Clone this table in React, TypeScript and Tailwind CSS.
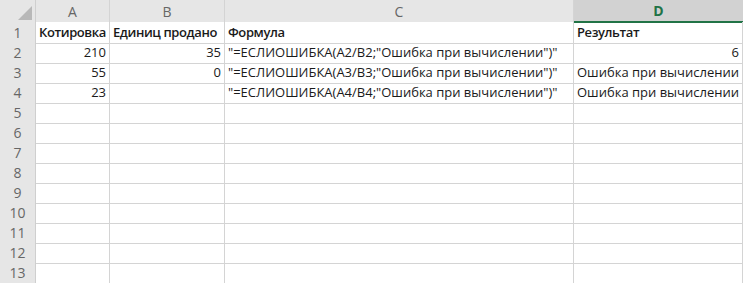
const COLS = ["A", "B", "C", "D"];

type Cell = { text: string; align?: "left" | "right"; bold?: boolean };

const ROWS: Cell[][] = [
  [
    { text: "Котировка", bold: true },
    { text: "Единиц продано", bold: true },
    { text: "Формула", bold: true },
    { text: "Результат", bold: true },
  ],
  [
    { text: "210", align: "right" },
    { text: "35", align: "right" },
    { text: "\"=ЕСЛИОШИБКА(A2/B2;\"Ошибка при вычислении\")\"" },
    { text: "6", align: "right" },
  ],
  [
    { text: "55", align: "right" },
    { text: "0", align: "right" },
    { text: "\"=ЕСЛИОШИБКА(A3/B3;\"Ошибка при вычислении\")\"" },
    { text: "Ошибка при вычислении" },
  ],
  [
    { text: "23", align: "right" },
    { text: "" },
    { text: "\"=ЕСЛИОШИБКА(A4/B4;\"Ошибка при вычислении\")\"" },
    { text: "Ошибка при вычислении" },
  ],
];

const grid = "grid grid-cols-[36px_74px_115px_349px_1fr]";

export default function App() {
  const rows = Array.from({ length: 13 }, (_, i) => ROWS[i] ?? [{ text: "" }, { text: "" }, { text: "" }, { text: "" }]);
  return (
    <div
      className="w-[743px] h-[283px] overflow-hidden bg-white text-[13px] text-[#1a1a1a]"
      style={{ fontFamily: "'Open Sans', 'Noto Sans', sans-serif" }}
    >
      <div className={`${grid} h-[22px] bg-[#e6e6e6]`}>
        <div className="relative border-r border-[#cfcfcf]">
          <div className="absolute right-[3px] bottom-[3px] w-0 h-0 border-l-[14px] border-l-transparent border-b-[14px] border-b-[#b8b8b8]" />
        </div>
        {COLS.map((c) =>
          c === "D" ? (
            <div
              key={c}
              className="flex items-center justify-center bg-[#d2d2d2] border-b-2 border-[#217346] font-bold text-[#217346] text-[14px]"
            >
              {c}
            </div>
          ) : (
            <div key={c} className="flex items-center justify-center border-r border-[#d4d4d4] text-[#666666] text-[14px]">
              {c}
            </div>
          )
        )}
      </div>
      {rows.map((r, i) => (
        <div key={i} className={`${grid} h-[20px]`}>
          <div className="flex items-center justify-center bg-[#e6e6e6] border-r border-b border-[#cfcfcf] text-[#666666] text-[14px]">
            {i + 1}
          </div>
          {r.map((cell, j) => (
            <div
              key={j}
              className={`flex items-center px-[3px] border-r border-b border-[#d4d4d4] whitespace-nowrap overflow-visible leading-none ${
                cell.align === "right" ? "justify-end" : "justify-start"
              } ${cell.bold ? "font-semibold tracking-[-0.4px]" : ""}`}
            >
              {cell.text}
            </div>
          ))}
        </div>
      ))}
    </div>
  );
}
